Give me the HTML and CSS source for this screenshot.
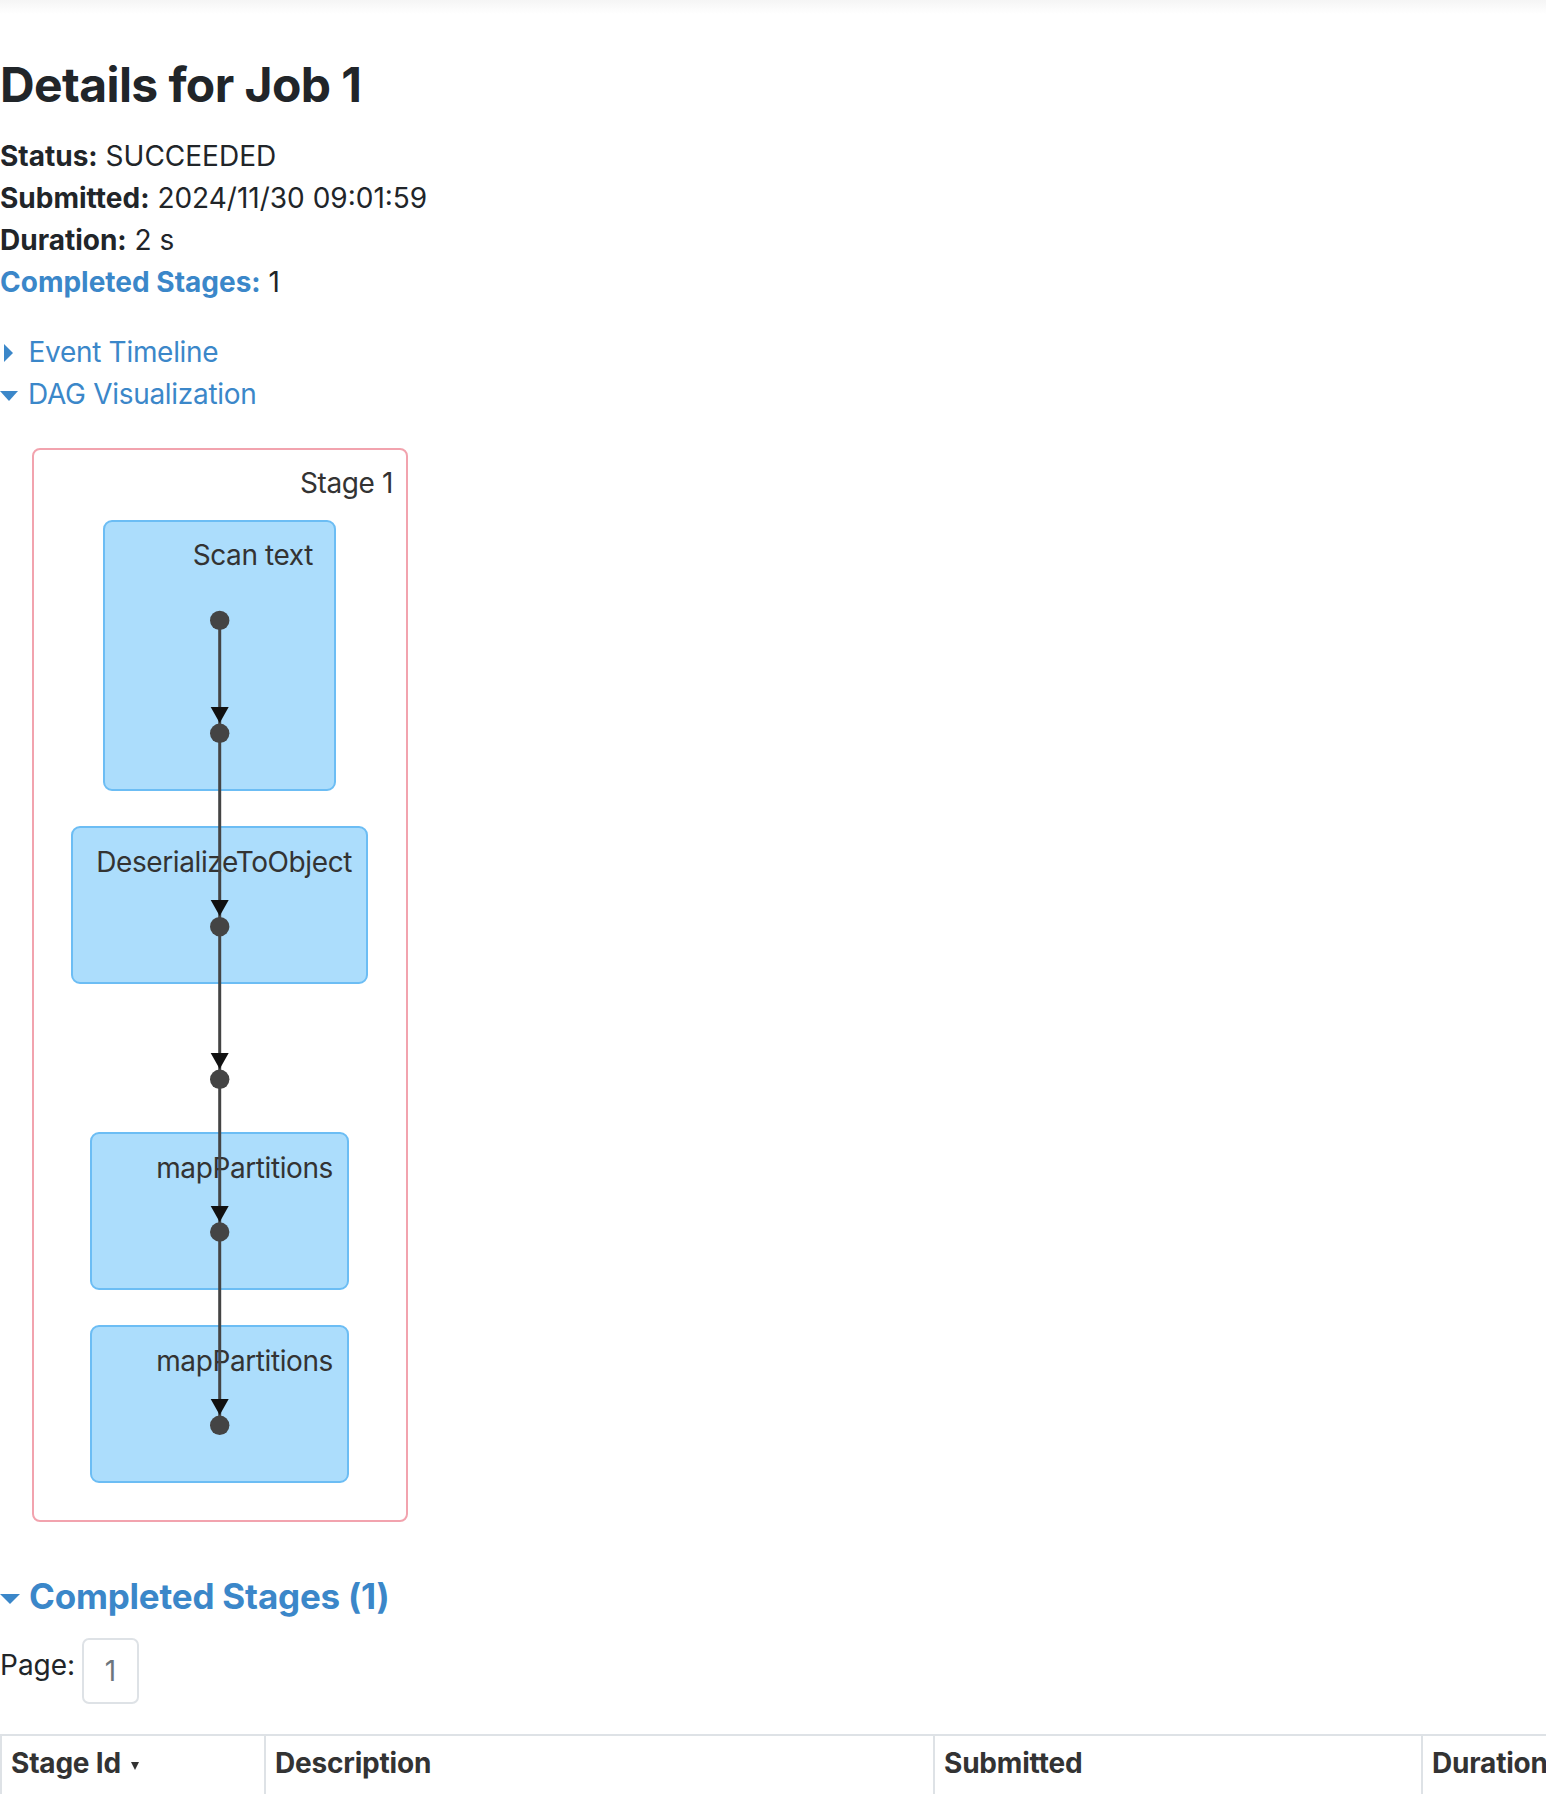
FILE: index.html
```html
<!DOCTYPE html>
<html>
<head>
<meta charset="utf-8">
<link rel="stylesheet" href="styles.css">
</head>
<body>
<div class="topshade"></div>
<h3 class="title">Details for Job 1</h3>
<ul class="info">
  <li><strong>Status:</strong> SUCCEEDED</li>
  <li><strong>Submitted:</strong> 2024/11/30 09:01:59</li>
  <li><strong>Duration:</strong> 2 s</li>
  <li><a class="infolink" href="#completed"><strong>Completed Stages:</strong></a> 1</li>
</ul>
<div class="toggle toggle-first"><span class="arrow-closed"></span><a href="#timeline">Event Timeline</a></div>
<div class="toggle"><span class="arrow-open"></span><a href="#dag">DAG Visualization</a></div>
<svg class="dag" width="420" height="1090" viewBox="0 0 420 1090" xmlns="http://www.w3.org/2000/svg">
  <rect class="stage" x="33" y="8" width="374" height="1072" rx="7" ry="7"/>
  <text class="lbl" x="393" y="52" text-anchor="end">Stage 1</text>

  <rect class="op" x="104" y="80" width="231" height="269" rx="8" ry="8"/>
  <text class="lbl" x="313" y="124" text-anchor="end">Scan text</text>

  <rect class="op" x="72" y="386" width="295" height="156" rx="8" ry="8"/>
  <text class="lbl" x="352" y="431" text-anchor="end">DeserializeToObject</text>

  <rect class="op" x="91" y="692" width="257" height="156" rx="8" ry="8"/>
  <text class="lbl" x="333" y="737" text-anchor="end">mapPartitions</text>

  <rect class="op" x="91" y="885" width="257" height="156" rx="8" ry="8"/>
  <text class="lbl" x="333" y="930" text-anchor="end">mapPartitions</text>

  <line class="edge" x1="219.7" y1="179" x2="219.7" y2="984"/>

  <polygon class="head" points="210.7,266 228.7,266 219.7,282"/>
  <polygon class="head" points="210.7,459 228.7,459 219.7,475"/>
  <polygon class="head" points="210.7,612 228.7,612 219.7,628"/>
  <polygon class="head" points="210.7,765 228.7,765 219.7,781"/>
  <polygon class="head" points="210.7,958 228.7,958 219.7,974"/>

  <circle class="dot" cx="219.7" cy="179.4" r="9.7"/>
  <circle class="dot" cx="219.7" cy="292.3" r="9.7"/>
  <circle class="dot" cx="219.7" cy="485.7" r="9.7"/>
  <circle class="dot" cx="219.7" cy="638.3" r="9.7"/>
  <circle class="dot" cx="219.7" cy="791" r="9.7"/>
  <circle class="dot" cx="219.7" cy="984.3" r="9.7"/>
</svg>
<h4 class="section" id="completed"><span class="arrow-open big"></span><a href="#completed">Completed Stages (1)</a></h4>
<div class="pager">
  <span class="pager-label">Page:</span>
  <span class="pager-box">1</span>
</div>
<div class="tablewrap">
  <table class="stages">
    <colgroup>
      <col class="c1"><col class="c2"><col class="c3"><col class="c4">
    </colgroup>
    <thead>
      <tr>
        <th>Stage Id<span class="sort"></span></th>
        <th>Description</th>
        <th>Submitted</th>
        <th>Duration</th>
      </tr>
    </thead>
  </table>
</div>
</body>
</html>
```
FILE: styles.css
```css
html, body {
  margin: 0;
  padding: 0;
  background: #ffffff;
}
body {
  font-family: Inter, "Noto Sans", "DejaVu Sans", sans-serif;
  font-size: 28px;
  line-height: 42px;
  color: #212529;
  width: 1546px;
  overflow: hidden;
}
a {
  color: #3b87c9;
  text-decoration: none;
}
.topshade {
  height: 14px;
  background: linear-gradient(to bottom, #f5f5f5, #ffffff);
}
.title {
  margin: 41px 0 20px 0;
  font-size: 48px;
  line-height: 60px;
  font-weight: 700;
  letter-spacing: -0.6px;
}
.info {
  list-style: none;
  margin: 0;
  padding: 0;
}
.info strong {
  font-weight: 700;
}
.infolink {
  color: #3b87c9;
}
.toggle {
  height: 42px;
  letter-spacing: -0.3px;
}
.toggle-first {
  margin-top: 28px;
}
.arrow-closed {
  display: inline-block;
  width: 0;
  height: 0;
  border-top: 9.5px solid transparent;
  border-bottom: 9.5px solid transparent;
  border-left: 9.5px solid #3b87c9;
  margin: 0 15.5px 0 4px;
  vertical-align: baseline;
}
.arrow-open {
  display: inline-block;
  width: 0;
  height: 0;
  border-left: 9.5px solid transparent;
  border-right: 9.5px solid transparent;
  border-top: 10px solid #3b87c9;
  margin: 0 10px 3px 0;
  vertical-align: baseline;
}
.arrow-open.big {
  border-left-width: 10px;
  border-right-width: 10px;
  border-top-width: 10px;
  margin: 0 9px 5px 0;
}
.dag {
  display: block;
  margin-top: 26px;
}
.dag .stage {
  fill: #ffffff;
  stroke: #f2a3ae;
  stroke-width: 2;
}
.dag .op {
  fill: #acddfc;
  stroke: #6cbdf4;
  stroke-width: 2;
}
.dag .lbl {
  font-family: Inter, "Noto Sans", sans-serif;
  font-size: 28px;
  fill: #333333;
  letter-spacing: -0.4px;
}
.dag .edge {
  stroke: #444444;
  stroke-width: 3;
}
.dag .head {
  fill: #111111;
}
.dag .dot {
  fill: #444444;
}
.section {
  margin: 44px 0 0 0;
  font-size: 35px;
  line-height: 42px;
  font-weight: 700;
  letter-spacing: -0.2px;
}
.pager {
  display: flex;
  align-items: flex-start;
  margin-top: 21px;
  height: 66px;
}
.pager-label {
  margin-top: 6px;
  width: 82px;
}
.pager-box {
  box-sizing: border-box;
  width: 57px;
  height: 66px;
  border: 2px solid #dee2e6;
  border-radius: 7px;
  text-align: center;
  line-height: 62px;
  color: #6c757d;
}
.tablewrap {
  margin-top: 30px;
  width: 1546px;
  overflow: hidden;
}
.stages {
  table-layout: fixed;
  border-collapse: collapse;
  width: 1800px;
}
.stages .c1 { width: 264px; }
.stages .c2 { width: 669px; }
.stages .c3 { width: 488px; }
.stages .c4 { width: 379px; }
.stages th {
  border: 2px solid #dee2e6;
  padding: 6px 9px 10px 9px;
  text-align: left;
  font-weight: 700;
  color: #333333;
  line-height: 42px;
  white-space: nowrap;
  letter-spacing: -0.2px;
}
.sort {
  display: inline-block;
  width: 0;
  height: 0;
  border-left: 4.5px solid transparent;
  border-right: 4.5px solid transparent;
  border-top: 8px solid #333333;
  margin: 0 0 3px 10px;
  vertical-align: baseline;
}
```
